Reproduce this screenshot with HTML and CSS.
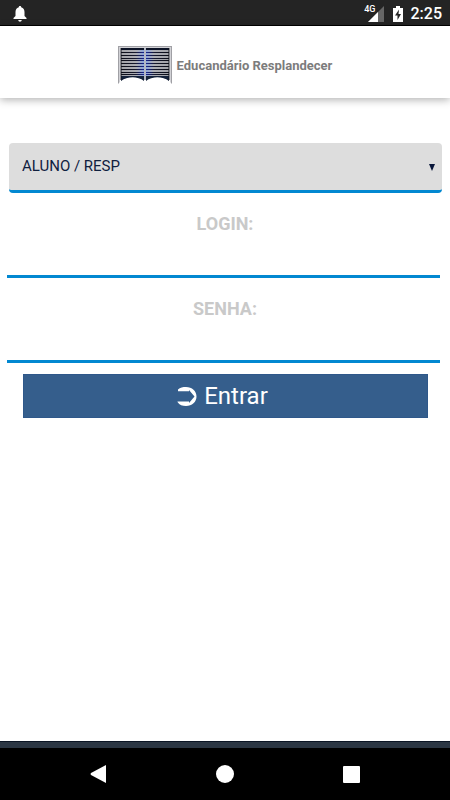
FILE: index.html
```html
<!DOCTYPE html>
<html lang="pt-BR">
<head>
<meta charset="utf-8">
<meta name="viewport" content="width=device-width, initial-scale=1">
<title>Educandário Resplandecer</title>
<link rel="stylesheet" href="styles.css">
</head>
<body>
<div class="status">
  <svg class="bell" width="14" height="16" viewBox="0 0 14 16" aria-hidden="true"><path fill="#fff" d="M7 0c.8 0 1.200.5 1.200 1.300C10.500 2 11.500 3.800 11.500 6v4L13.500 12v1H.5v-1L2.500 10V6c0-2.200 1-4 3.300-4.700C5.800.5 6.200 0 7 0zM5.300 14h3.400c0 1-.7 1.700-1.700 1.700S5.300 15 5.300 14z"/></svg>
  <div class="status-right">
    <span class="network">4G</span>
    <svg class="signal" width="16" height="16" viewBox="0 0 16 16" aria-hidden="true"><path fill="#666" d="M16 0v16H0z"/><path fill="#fff" d="M10 6v10H0z"/></svg>
    <svg class="battery" width="10" height="16" viewBox="0 0 10 16" aria-hidden="true"><path fill="#fff" d="M3 0h4v2h3v14H0V2h3z"/><path fill="#242424" d="M6 3.500 2 9.500h2.500V14L8 8H5.500z"/></svg>
    <span>2:25</span>
  </div>
</div>
<header class="header">
  <svg width="54" height="38" viewBox="0 0 54 38" aria-hidden="true">
    <defs>
      <linearGradient id="page" x1="0" x2="1"><stop offset="0" stop-color="#a2a3a8"/><stop offset=".32" stop-color="#adaeb4"/><stop offset=".5" stop-color="#86a2e0"/><stop offset=".68" stop-color="#adaeb4"/><stop offset="1" stop-color="#a2a3a8"/></linearGradient>
      <linearGradient id="ink" gradientUnits="userSpaceOnUse" x1="3" x2="51" y1="0" y2="0"><stop offset="0" stop-color="#0b0d16"/><stop offset=".3" stop-color="#15182c"/><stop offset=".5" stop-color="#17239a"/><stop offset=".7" stop-color="#15182c"/><stop offset="1" stop-color="#0b0d16"/></linearGradient>
    </defs>
    <path fill="#a0a0a5" d="M0 0h54v38l-1-1V1H1v36l-1 1z"/>
    <path fill="#d2d2d6" d="M1 1h52v36l-1-1V2H2v34l-1 1z"/>
    <path fill="url(#page)" d="M3 2h48v33c-6-5-17-5-23-1h-2c-6-4-17-4-23 1z"/>
    <path fill="none" stroke="url(#ink)" stroke-width="1" d="M3 6.500h48.010M3 9.500h48.010M3 12.500h48.010M3 14.500h48.010M3 17.500h48.010M3 20.500h48.010M3 23.500h48.010M3 26.500h48.010M3 28.500h48.010"/>
    <path fill="#0c1326" d="M3 2h23v2H3zM28 2h23v2H28z"/>
    <path fill="#14223a" d="M3 30h23v5c-6-5-17-5-23 0zM28 30h23v5c-6-5-17-5-23 0z"/>
    <path fill="none" stroke="#10131d" d="M3 2v32M51 2v32"/>
    <path fill="#b4b8c4" d="M26 2h2v32h-2z"/>
  </svg>
  <h1 class="title">Educandário Resplandecer</h1>
</header>
<main class="main">
  <form class="form">
    <div class="picker">
      <select class="select" aria-label="Perfil"><option>ALUNO / RESP</option></select>
      <svg class="caret" width="8" height="7" viewBox="0 0 8 7" aria-hidden="true"><path fill="#08163a" d="M1 0h6L4 7z"/></svg>
    </div>
    <div class="field">
      <label class="label" for="login">LOGIN:</label>
      <input class="input" id="login" type="text">
    </div>
    <div class="field">
      <label class="label" for="senha">SENHA:</label>
      <input class="input" id="senha" type="password">
    </div>
    <button class="submit" type="button">
      <svg width="20" height="20" viewBox="0 0 20 20" aria-hidden="true"><path fill="#fff" d="M1 3.500C3 1.500 6 1 9 1c6 0 10.500 4 10.500 9.500S15 20 9 20c-3.500 0-6.500-1-8.500-4v-.5H12V17l5.500-6.500L12 4v1.200H1z"/></svg>
      <span>Entrar</span>
    </button>
  </form>
</main>
<div class="strip"></div>
<nav class="nav">
  <button class="key" type="button" aria-label="Voltar"><svg width="18" height="18" viewBox="0 0 18 18"><path fill="#fff" d="M16 0v18L1 10q-1-1 0-2z"/></svg></button>
  <button class="key" type="button" aria-label="Início"><svg width="18" height="18" viewBox="0 0 18 18"><circle cx="9" cy="9" r="9" fill="#fff"/></svg></button>
  <button class="key" type="button" aria-label="Recentes"><svg width="18" height="18" viewBox="0 0 18 18"><rect x="1" y="1" width="17" height="17" rx="1" fill="#fff"/></svg></button>
</nav>
</body>
</html>
```
FILE: styles.css
```css
* { box-sizing: border-box; }

body {
  margin: 0;
  min-height: 100vh;
  display: flex;
  flex-direction: column;
  background: #fff;
  font-family: Roboto, "Liberation Sans", sans-serif;
}

.status {
  display: flex;
  justify-content: space-between;
  align-items: center;
  height: 26px;
  padding: 2px 8px 0 13px;
  background: #242424;
  border-bottom: 1px solid #000;
  color: #fff;
  font-size: 16px;
  font-weight: 500;
}

.status-right { display: flex; align-items: center; }

.network {
  align-self: flex-start;
  font-size: 9px;
  line-height: 10px;
  margin-right: -8px;
  z-index: 1;
}

.battery { margin: 0 8px 0 9px; }

.header {
  display: flex;
  justify-content: center;
  align-items: center;
  gap: 5px;
  height: 72px;
  padding-top: 6px;
  background: #fff;
  box-shadow: 0 2px 8px rgba(0, 0, 0, 0.3);
}

.title {
  margin: 0;
  color: #7c7c7c;
  font-size: 13px;
  font-weight: 700;
}

.main { flex: 1; padding: 45px 0 20px; }

.form { display: flex; flex-direction: column; }

.picker {
  position: relative;
  margin: 0 8px 19px 9px;
}

.select {
  display: block;
  width: 100%;
  height: 50px;
  padding: 0 32px 2px 13px;
  appearance: none;
  border: 0;
  border-bottom: 3px solid #0288d1;
  border-radius: 4px;
  background: #ddd;
  color: #10203f;
  font: 15px Roboto, "Liberation Sans", sans-serif;
}

.caret {
  position: absolute;
  right: 6px;
  top: 21px;
  pointer-events: none;
}

.field { margin-bottom: 19px; }

.label {
  display: block;
  color: #c9c9c9;
  font-size: 18px;
  font-weight: 700;
  line-height: 24px;
  text-align: center;
}

.input {
  display: block;
  width: calc(100% - 17px);
  height: 42px;
  margin: 0 10px 0 7px;
  padding: 0 8px;
  border: 0;
  border-bottom: 3px solid #0288d1;
  background: transparent;
  font: 16px Roboto, "Liberation Sans", sans-serif;
}

.submit {
  display: flex;
  justify-content: center;
  align-items: center;
  gap: 7px;
  height: 44px;
  margin: -8px 22px 0 23px;
  padding: 0 6px 0 0;
  border: 1px solid #2f588a;
  background: #355e8c;
  color: #fff;
  font: 24px Roboto, "Liberation Sans", sans-serif;
}

.strip {
  height: 7px;
  background: #2b3643;
  border-top: 1px solid #0b1524;
}

.nav {
  display: flex;
  justify-content: center;
  gap: 36px;
  height: 52px;
  background: #000;
}

.key {
  display: flex;
  justify-content: center;
  align-items: center;
  width: 90px;
  padding: 0;
  border: 0;
  background: transparent;
}
```
